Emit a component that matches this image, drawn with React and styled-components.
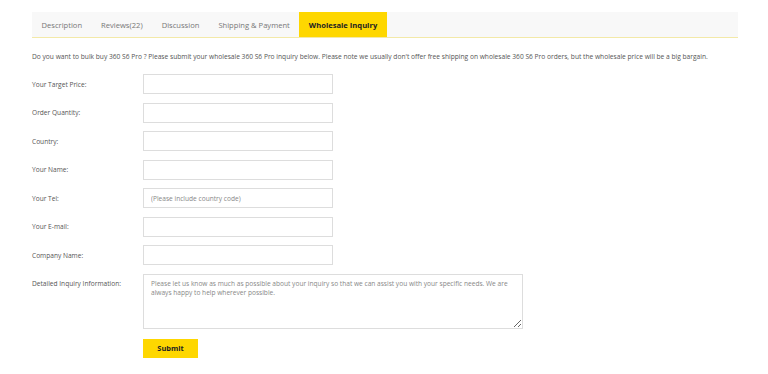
import React from 'react';
import styled, { createGlobalStyle } from 'styled-components';

const GlobalStyle = createGlobalStyle`
	body {
		margin: 0;
		background: #fff;
		font-family: "Open Sans", "Liberation Sans", sans-serif;
		color: #555;
	}
`;

const Page = styled.div`
	padding: 12px 30px 0 32px;
	width: 706px;
`;

const TabBar = styled.div`
	display: flex;
	height: 25px;
	background-color: #f8f8f8;
	border-bottom: 1px solid #f3e9a8;
`;

const Tab = styled.div`
	display: flex;
	align-items: center;
	padding: 0 9.5px;
	font-size: 7.6px;
	color: ${p => p.active ? '#222' : '#777'};
	font-weight: ${p => p.active ? 700 : 400};
	background-color: ${p => p.active ? '#fed700' : 'transparent'};
`;

const Intro = styled.p`
	margin: 14px 0 13px;
	font-size: 6.65px;
	color: #555;
	white-space: nowrap;
`;

const Form = styled.div`
	display: grid;
	grid-template-columns: 111px auto;
	row-gap: 8.5px;
	align-items: center;
`;

const Label = styled.label`
	font-size: 6.6px;
	color: #555;
	align-self: ${p => p.top ? 'start' : 'center'};
	padding-top: ${p => p.top ? '5px' : '0'};
`;

const Input = styled.input`
	box-sizing: border-box;
	width: 190px;
	height: 20px;
	border: 1px solid #ddd;
	padding: 0 7px;
	font-family: inherit;
	font-size: 6.6px;
	color: #555;
	outline: none;

	&::placeholder {
		color: #888;
	}
`;

const TextArea = styled.textarea`
	box-sizing: border-box;
	width: 380px;
	height: 55px;
	border: 1px solid #ddd;
	padding: 4px 7px;
	font-family: inherit;
	font-size: 6.6px;
	line-height: 9px;
	outline: none;
	display: block;

	&::placeholder {
		color: #888;
	}
`;

const Submit = styled.button`
	width: 55px;
	height: 19px;
	border: none;
	background-color: #fed700;
	color: #222;
	font-family: inherit;
	font-weight: 700;
	font-size: 7.4px;
	padding: 0;
	margin-top: 1.5px;
	cursor: pointer;
`;

const fields = [
	['Your Target Price:', ''],
	['Order Quantity:', ''],
	['Country:', ''],
	['Your Name:', ''],
	['Your Tel:', '(Please include country code)'],
	['Your E-mail:', ''],
	['Company Name:', ''],
];

const tabs = ['Description', 'Reviews(22)', 'Discussion', 'Shipping & Payment', 'Wholesale Inquiry'];

export default function App() {
	return <Page>
		<GlobalStyle />
		<TabBar>
			{tabs.map(t => <Tab key={t} active={t === 'Wholesale Inquiry'}>{t}</Tab>)}
		</TabBar>
		<Intro>Do you want to bulk buy 360 S6 Pro ? Please submit your wholesale 360 S6 Pro inquiry below. Please note we usually don't offer free shipping on wholesale 360 S6 Pro orders, but the wholesale price will be a big bargain.</Intro>
		<Form>
			{fields.map(([label, ph]) => <React.Fragment key={label}>
				<Label>{label}</Label>
				<Input placeholder={ph} />
			</React.Fragment>)}
			<Label top>Detailed Inquiry Information:</Label>
			<TextArea placeholder="Please let us know as much as possible about your inquiry so that we can assist you with your specific needs. We are always happy to help wherever possible." />
			<span />
			<Submit>Submit</Submit>
		</Form>
	</Page>;
}
